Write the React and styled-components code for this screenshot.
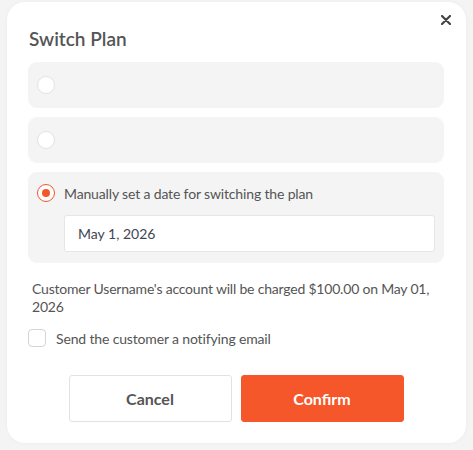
import styled, { createGlobalStyle } from 'styled-components';

const GlobalStyle = createGlobalStyle`
  html, body {
    margin: 0;
    padding: 0;
    background: #f4f4f4;
  }
  body {
    font-family: Lato, "Liberation Sans", sans-serif;
  }
  * { box-sizing: border-box; }
`;

const Page = styled.div`
  width: 473px;
  height: 450px;
  padding: 2px 7px 0 7px;
`;

const Modal = styled.div`
  position: relative;
  width: 459px;
  height: 441px;
  background: #fff;
  border-radius: 18px;
  box-shadow: 0 0 4px rgba(0, 0, 0, 0.04);
  padding: 25px 22px 0 21px;
  display: flex;
  flex-direction: column;
`;

const Close = styled.button`
  position: absolute;
  top: 10px;
  right: 12px;
  width: 16px;
  height: 16px;
  border: none;
  background: none;
  padding: 0;
  display: flex;
  align-items: center;
  justify-content: center;
  cursor: pointer;
`;

const Title = styled.h2`
  margin: 0 0 11px 1px;
  font-size: 19px;
  font-weight: 600;
  color: #555;
  line-height: 24px;
`;

const Options = styled.div`
  display: flex;
  flex-direction: column;
  gap: 9px;
`;

const Option = styled.div`
  background: #f4f4f4;
  border-radius: 9px;
  padding: ${p => (p.$expanded ? '11px 9px 11px 9px' : '13px 9px')};
  min-height: 46px;
`;

const OptionRow = styled.label`
  display: flex;
  align-items: center;
  gap: 9px;
  font-size: 14px;
  letter-spacing: -0.15px;
  color: #555;
  height: 20px;
`;

const Radio = styled.span`
  width: 18px;
  height: 18px;
  border-radius: 50%;
  background: #fff;
  border: 1px solid ${p => (p.$checked ? '#f4572a' : '#e2e2e2')};
  display: flex;
  align-items: center;
  justify-content: center;
  flex-shrink: 0;
  &::after {
    content: '';
    display: ${p => (p.$checked ? 'block' : 'none')};
    width: 8px;
    height: 8px;
    border-radius: 50%;
    background: #f4572a;
  }
`;

const DateInput = styled.div`
  margin: 12px 0 0 27px;
  height: 37px;
  background: #fff;
  border: 1px solid #e6e6e6;
  border-radius: 3px;
  padding: 0 13px;
  display: flex;
  align-items: center;
  font-size: 14px;
  color: #3f4654;
`;

const Notice = styled.p`
  margin: 17px 0 0 4px;
  font-size: 14px;
  letter-spacing: -0.2px;
  line-height: 18px;
  color: #555;
  padding-right: 4px;
`;

const CheckRow = styled.label`
  display: flex;
  align-items: center;
  gap: 10px;
  margin-top: 13px;
  font-size: 14px;
  letter-spacing: -0.15px;
  color: #555;
`;

const Checkbox = styled.span`
  width: 18px;
  height: 18px;
  border: 1px solid #d4d4d4;
  border-radius: 4px;
  background: #fff;
  flex-shrink: 0;
`;

const Actions = styled.div`
  display: flex;
  justify-content: center;
  gap: 9px;
  margin-top: 28px;
`;

const Button = styled.button`
  width: 163px;
  height: 47px;
  border-radius: 3px;
  font-family: inherit;
  font-size: 16px;
  font-weight: 700;
  cursor: pointer;
  border: 1px solid ${p => (p.$primary ? '#f5572a' : '#e2e2e2')};
  background: ${p => (p.$primary ? '#f5572a' : '#fff')};
  color: ${p => (p.$primary ? '#fff' : '#555')};
`;

export default function App() {
  return (
    <Page>
      <GlobalStyle />
      <Modal>
        <Close aria-label="close">
          <svg width="10" height="10" viewBox="0 0 10 10">
            <path d="M1 1L9 9M9 1L1 9" stroke="#444" strokeWidth="2.2" strokeLinecap="round" />
          </svg>
        </Close>
        <Title>Switch Plan</Title>
        <Options>
          <Option>
            <OptionRow><Radio /></OptionRow>
          </Option>
          <Option>
            <OptionRow><Radio /></OptionRow>
          </Option>
          <Option $expanded>
            <OptionRow>
              <Radio $checked />
              Manually set a date for switching the plan
            </OptionRow>
            <DateInput>May 1, 2026</DateInput>
          </Option>
        </Options>
        <Notice>
          Customer Username's account will be charged $100.00 on May 01, 2026
        </Notice>
        <CheckRow>
          <Checkbox />
          Send the customer a notifying email
        </CheckRow>
        <Actions>
          <Button>Cancel</Button>
          <Button $primary>Confirm</Button>
        </Actions>
      </Modal>
    </Page>
  );
}
